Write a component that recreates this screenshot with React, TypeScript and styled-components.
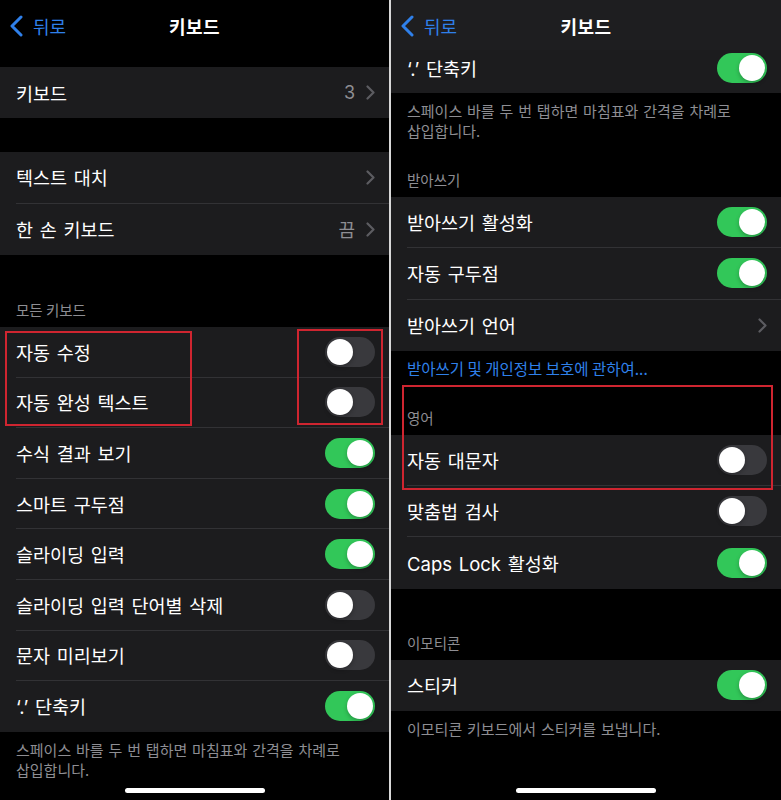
import React from 'react'
import styled, { createGlobalStyle } from 'styled-components'

const GlobalStyle = createGlobalStyle`
  * { box-sizing: border-box; }
  body {
    margin: 0;
    background: #000;
    font-family: "Noto Sans CJK KR", "Noto Sans", sans-serif;
    -webkit-font-smoothing: antialiased;
  }
`

const Screen = styled.div`
  display: flex;
  width: 781px;
  height: 800px;
  background: #000;
`

const Divider = styled.div`
  width: 2px;
  background: #d8d8d8;
`

const Panel = styled.div<{ $w: number }>`
  position: relative;
  width: ${({ $w }) => $w}px;
  height: 800px;
  display: flex;
  flex-direction: column;
  overflow: hidden;
  background: #000;
  color: #fff;
`

const Nav = styled.div<{ $scrolled?: boolean }>`
  height: 50px;
  flex-shrink: 0;
  display: grid;
  grid-template-columns: 1fr auto 1fr;
  align-items: center;
  padding: 0 10px;
  background: ${({ $scrolled }) => ($scrolled ? '#1e1e20' : '#000')};
`

const Back = styled.div`
  display: flex;
  align-items: center;
  gap: 10px;
  color: #2f80ea;
  font-size: 18px;
  padding-top: 2px;
`

const Title = styled.div`
  font-size: 18px;
  font-weight: 700;
  letter-spacing: 0.5px;
  padding-top: 2px;
`

const Group = styled.div<{ $top?: number }>`
  margin-top: ${({ $top }) => $top ?? 0}px;
  background: #1c1c1e;
`

const RowWrap = styled.div<{ $h: number; $clipBottom?: number }>`
  height: ${({ $h }) => $h}px;
  padding-left: 16px;
  padding-bottom: ${({ $clipBottom }) => $clipBottom ?? 0}px;
  display: flex;
`

const RowInner = styled.div<{ $sep: boolean }>`
  flex: 1;
  display: flex;
  align-items: center;
  padding-right: 14px;
  border-bottom: ${({ $sep }) => ($sep ? '1px solid #323235' : 'none')};
`

const Label = styled.div`
  flex: 1;
  font-size: 18.5px;
  color: #fff;
  word-spacing: 1.5px;
  white-space: nowrap;
  font-family: Inter, "Noto Sans CJK KR", sans-serif;
`

const Value = styled.span`
  font-size: 18px;
  color: #8e8e93;
  margin-right: 11px;
  font-family: Inter, "Noto Sans CJK KR", sans-serif;
`

const Track = styled.div<{ $on: boolean }>`
  width: 50px;
  height: 30px;
  border-radius: 15px;
  padding: 2px;
  display: flex;
  justify-content: ${({ $on }) => ($on ? 'flex-end' : 'flex-start')};
  background: ${({ $on }) => ($on ? '#32c759' : '#39393d')};
`

const Knob = styled.div`
  width: 26px;
  height: 26px;
  border-radius: 50%;
  background: #fff;
  box-shadow: 0 2px 4px rgba(0, 0, 0, 0.25);
`

const SectionHeader = styled.div<{ $top: number }>`
  margin-top: ${({ $top }) => $top}px;
  padding: 0 16px 7px;
  font-size: 14.5px;
  line-height: 20px;
  color: #8e8e93;
`

const Footer = styled.div`
  padding: 8px 16px 0;
  font-size: 15px;
  line-height: 20px;
  color: #8e8e93;
  word-break: keep-all;
  word-spacing: 1.5px;
`

const Link = styled.div`
  padding: 7px 16px 0;
  font-size: 15.5px;
  line-height: 20px;
  color: #2f80ea;
`

const HomeBar = styled.div`
  margin: auto auto 7px;
  width: 140px;
  height: 5px;
  border-radius: 3px;
  background: #fff;
`

const Highlight = styled.div`
  position: absolute;
  border: 2px solid #cf2530;
  pointer-events: none;
`

const Chevron = () => (
  <svg width="9" height="15" viewBox="0 0 9 15">
    <path d="M1.5 1.5L7.5 7.5L1.5 13.5" fill="none" stroke="#5c5c61" strokeWidth="2.2" strokeLinecap="round" strokeLinejoin="round" />
  </svg>
)

const BackChevron = () => (
  <svg width="13" height="22" viewBox="0 0 13 22">
    <path d="M11 2L2 11L11 20" fill="none" stroke="#2f80ea" strokeWidth="3" strokeLinecap="round" strokeLinejoin="round" />
  </svg>
)

type Item = {
  label: string
  toggle?: boolean
  value?: string
  chevron?: boolean
}

const Row: React.FC<Item & { sep: boolean; h?: number; clipBottom?: number }> = ({ label, toggle, value, chevron, sep, h = 50.6, clipBottom }) => (
  <RowWrap $h={h} $clipBottom={clipBottom}>
    <RowInner $sep={sep}>
      <Label>{label}</Label>
      {value && <Value>{value}</Value>}
      {chevron && <Chevron />}
      {toggle !== undefined && (
        <Track $on={toggle}>
          <Knob />
        </Track>
      )}
    </RowInner>
  </RowWrap>
)

const List: React.FC<{ items: Item[]; top?: number; h?: number }> = ({ items, top, h }) => (
  <Group $top={top}>
    {items.map((it, i) => (
      <Row key={it.label} {...it} h={h} sep={i < items.length - 1} />
    ))}
  </Group>
)

const NavBar: React.FC<{ scrolled?: boolean }> = ({ scrolled }) => (
  <Nav $scrolled={scrolled}>
    <Back>
      <BackChevron />
      <span>뒤로</span>
    </Back>
    <Title>키보드</Title>
    <div />
  </Nav>
)

const periodShortcut = '‘.’ 단축키'
const periodFooter = '스페이스 바를 두 번 탭하면 마침표와 간격을 차례로 삽입합니다.'

const App: React.FC = () => (
  <>
    <GlobalStyle />
    <Screen>
      <Panel $w={389}>
        <NavBar />
        <List top={17} h={51} items={[{ label: '키보드', value: '3', chevron: true }]} />
        <List
          top={34}
          h={51.5}
          items={[
            { label: '텍스트 대치', chevron: true },
            { label: '한 손 키보드', value: '끔', chevron: true },
          ]}
        />
        <SectionHeader $top={45}>모든 키보드</SectionHeader>
        <List
          items={[
            { label: '자동 수정', toggle: false },
            { label: '자동 완성 텍스트', toggle: false },
            { label: '수식 결과 보기', toggle: true },
            { label: '스마트 구두점', toggle: true },
            { label: '슬라이딩 입력', toggle: true },
            { label: '슬라이딩 입력 단어별 삭제', toggle: false },
            { label: '문자 미리보기', toggle: false },
            { label: periodShortcut, toggle: true },
          ]}
        />
        <Footer>{periodFooter}</Footer>
        <HomeBar />
        <Highlight style={{ left: 5, top: 331, width: 187, height: 95 }} />
        <Highlight style={{ left: 297, top: 329, width: 86, height: 96 }} />
      </Panel>
      <Divider />
      <Panel $w={390}>
        <NavBar scrolled />
        <Group>
          <Row label={periodShortcut} toggle sep={false} h={43} clipBottom={8} />
        </Group>
        <Footer>{periodFooter}</Footer>
        <SectionHeader $top={29}>받아쓰기</SectionHeader>
        <List
          h={51.3}
          items={[
            { label: '받아쓰기 활성화', toggle: true },
            { label: '자동 구두점', toggle: true },
            { label: '받아쓰기 언어', chevron: true },
          ]}
        />
        <Link>받아쓰기 및 개인정보 보호에 관하여...</Link>
        <SectionHeader $top={30}>영어</SectionHeader>
        <List
          h={51.3}
          items={[
            { label: '자동 대문자', toggle: false },
            { label: '맞춤법 검사', toggle: false },
            { label: 'Caps Lock 활성화', toggle: true },
          ]}
        />
        <SectionHeader $top={44}>이모티콘</SectionHeader>
        <List h={51.3} items={[{ label: '스티커', toggle: true }]} />
        <Footer>이모티콘 키보드에서 스티커를 보냅니다.</Footer>
        <HomeBar />
        <Highlight style={{ left: 11, top: 385, width: 371, height: 105 }} />
      </Panel>
    </Screen>
  </>
)

export default App
